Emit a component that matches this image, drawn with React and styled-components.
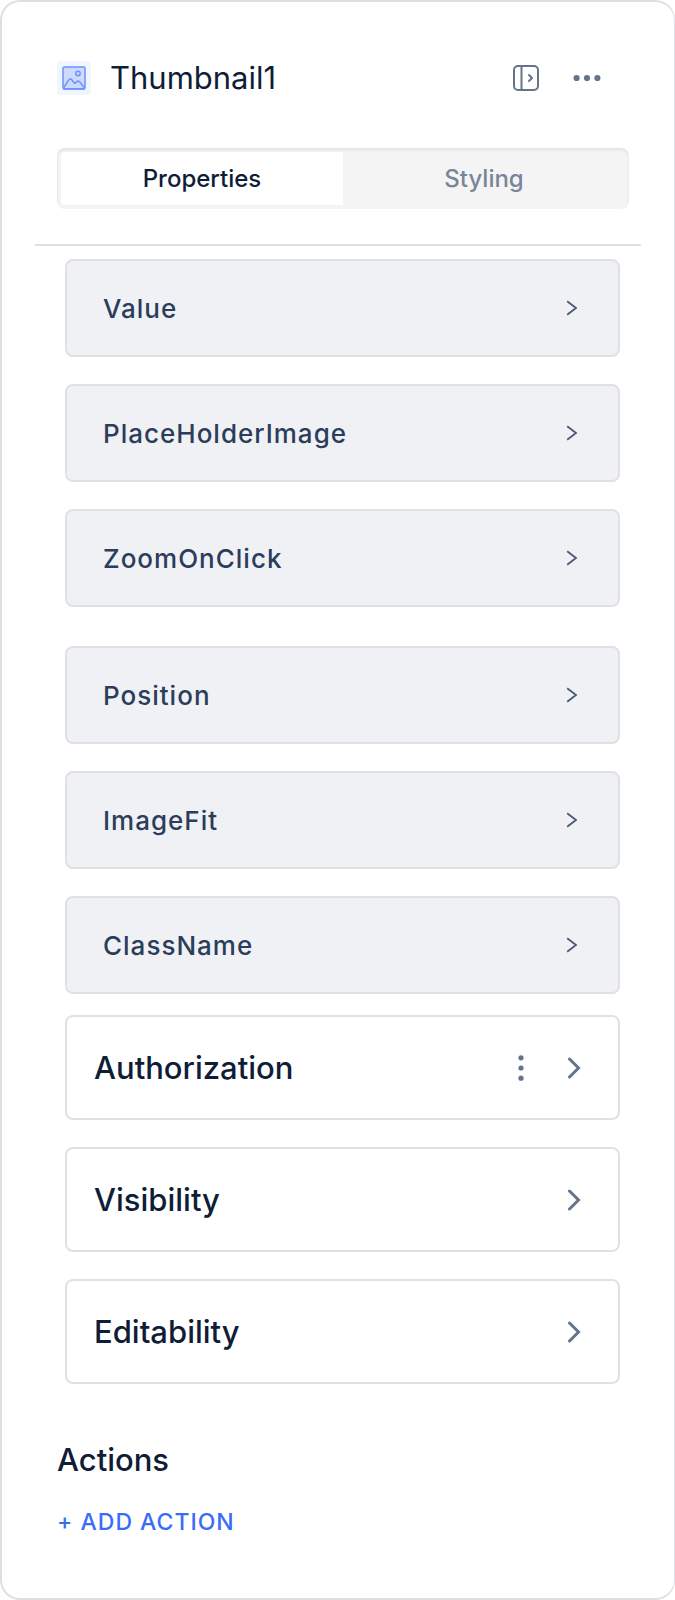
import React, { useState } from 'react';
import styled, { createGlobalStyle } from 'styled-components';

const GlobalStyle = createGlobalStyle`
	* {
		box-sizing: border-box;
	}

	body {
		margin: 0;
		background: #fff;
		font-family: Inter, "Liberation Sans", sans-serif;
		color: #0f1d37;
	}

	button {
		font: inherit;
		color: inherit;
		background: none;
		border: none;
		padding: 0;
		cursor: pointer;
	}

	svg {
		display: block;
	}
`;

const Panel = styled.main`
	min-height: 100vh;
	padding: 56px 33px 34px;
	border: 2px solid #dcdfe5;
	border-right-width: 1px;
	border-radius: 20px;
`;

const Header = styled.header`
	display: flex;
	align-items: center;
	height: 40px;
	padding: 0 22px;
`;

const WidgetIcon = styled.span`
	padding: 5px;
	margin-right: 19px;
	border-radius: 4px;
	background: #f0f5ff;
`;

const Title = styled.h1`
	flex: 1;
	margin: 0;
	font-size: 31px;
	line-height: 40px;
	font-weight: 400;
`;

const HeaderActions = styled.div`
	display: flex;
	align-items: center;
	gap: 34px;
	padding-right: 18px;
	color: #64748b;
`;

const Tabs = styled.div`
	display: flex;
	height: 61px;
	margin: 50px 12px 35px 22px;
	padding: 4px;
	border-radius: 8px;
	background: #f4f4f4;
	box-shadow: inset 0 2px 3px rgba(0, 0, 0, 0.08);
`;

const Tab = styled.button`
	flex: 1;
	font-size: 24px;
	font-weight: 500;
	border-radius: 4px 0 0 4px;
	color: ${(props) => (props.$active ? '#0f1d37' : '#78859b')};
	background: ${(props) => (props.$active ? '#fff' : 'transparent')};
`;

const Divider = styled.hr`
	margin: 0;
	border: none;
	border-top: 2px solid #dee0e4;
`;

const Group = styled.section`
	display: flex;
	flex-direction: column;
	gap: 27px;
	padding: 0 21px 0 30px;
	margin-top: ${(props) => props.$top}px;
`;

const PropertyRow = styled.button`
	display: flex;
	align-items: center;
	justify-content: space-between;
	height: 98px;
	padding: 0 40px 0 36px;
	border: 2px solid #dfe1e5;
	border-radius: 8px;
	background: #f0f1f4;
	color: #2b3d5b;
	font-size: 26px;
	font-weight: 500;
	letter-spacing: 1px;
`;

const SettingRow = styled.div`
	display: flex;
	align-items: center;
	height: 105px;
	padding: 0 37px 0 27px;
	border: 2px solid #dfe1e6;
	border-radius: 8px;
	color: #64748b;
`;

const SettingTitle = styled.button`
	flex: 1;
	align-self: stretch;
	text-align: left;
	font-size: 31px;
	font-weight: 500;
	color: #0f1d37;
`;

const IconButton = styled.button`
	display: flex;
	align-items: center;
	justify-content: center;
`;

const MenuButton = styled(IconButton)`
	margin-right: 43px;
`;

const Actions = styled.section`
	padding: 0 22px;
	margin-top: 56px;
`;

const ActionsTitle = styled.h2`
	margin: 0 0 22px;
	font-size: 31px;
	line-height: 40px;
	font-weight: 500;
`;

const AddAction = styled.button`
	font-size: 23px;
	line-height: 40px;
	font-weight: 500;
	letter-spacing: 1px;
	color: #3b6cf8;
`;

const ImageIcon = () => (
	<svg width="24" height="24" viewBox="0 0 24 24" fill="none" stroke="#6b93fb" strokeWidth="1.5">
		<rect x="1" y="1" width="22" height="22" rx="1.5" fill="#cddafc" />
		<circle cx="16" cy="7.5" r="2.2" />
		<path d="M1.5 22L6.6 14.2Q8.2 11.8 9.8 13.8L12 16.8Q12.8 17.8 13.8 16.6L14.8 15.6Q16.2 14.4 17.6 15.8L22.5 22" />
		<path d="M1.5 22.8H22.5" />
	</svg>
);

const CollapseIcon = () => (
	<svg width="26" height="26" viewBox="0 0 26 26" fill="none" stroke="currentColor" strokeWidth="2" strokeLinecap="round" strokeLinejoin="round">
		<rect x="1" y="1" width="24" height="24" rx="4" />
		<path d="M8.5 1V25M16 10L19 13L16 16" />
	</svg>
);

const MoreIcon = () => (
	<svg width="28" height="8" viewBox="0 0 28 8" fill="currentColor">
		<circle cx="3.6" cy="4" r="3.1" />
		<circle cx="14" cy="4" r="3.1" />
		<circle cx="24.4" cy="4" r="3.1" />
	</svg>
);

const KebabIcon = () => (
	<svg width="6" height="28" viewBox="0 0 6 28" fill="currentColor">
		<circle cx="3" cy="3.8" r="2.6" />
		<circle cx="3" cy="14" r="2.6" />
		<circle cx="3" cy="24.2" r="2.6" />
	</svg>
);

const SmallChevron = () => (
	<svg width="12" height="16" viewBox="0 0 12 16" fill="none" stroke="#4a5a75" strokeWidth="1.8">
		<path d="M1.2 1.2L10 8L1.2 14.8" />
	</svg>
);

const Chevron = () => (
	<svg width="14" height="22" viewBox="0 0 14 22" fill="none" stroke="currentColor" strokeWidth="3" strokeLinecap="round">
		<path d="M2.5 2L11.5 11L2.5 20" />
	</svg>
);

const TABS = ['Properties', 'Styling'];

const PROPERTY_GROUPS = [
	{ top: 13, names: ['Value', 'PlaceHolderImage', 'ZoomOnClick'] },
	{ top: 39, names: ['Position', 'ImageFit', 'ClassName'] },
];

const SETTINGS = [
	{ name: 'Authorization', menu: true },
	{ name: 'Visibility' },
	{ name: 'Editability' },
];

function App() {
	const [activeTab, setActiveTab] = useState('Properties');

	return (
		<>
			<GlobalStyle />
			<Panel>
				<Header>
					<WidgetIcon><ImageIcon /></WidgetIcon>
					<Title>Thumbnail1</Title>
					<HeaderActions>
						<IconButton aria-label="Collapse panel"><CollapseIcon /></IconButton>
						<IconButton aria-label="More options"><MoreIcon /></IconButton>
					</HeaderActions>
				</Header>

				<Tabs role="tablist">
					{TABS.map((tab) => (
						<Tab
							key={tab}
							role="tab"
							aria-selected={activeTab === tab}
							$active={activeTab === tab}
							onClick={() => setActiveTab(tab)}
						>
							{tab}
						</Tab>
					))}
				</Tabs>

				<Divider />

				{PROPERTY_GROUPS.map((group) => (
					<Group key={group.names[0]} $top={group.top}>
						{group.names.map((name) => (
							<PropertyRow key={name}>
								{name}
								<SmallChevron />
							</PropertyRow>
						))}
					</Group>
				))}

				<Group $top={21}>
					{SETTINGS.map(({ name, menu }) => (
						<SettingRow key={name}>
							<SettingTitle>{name}</SettingTitle>
							{menu && <MenuButton aria-label={`${name} options`}><KebabIcon /></MenuButton>}
							<IconButton aria-label={`Expand ${name}`}><Chevron /></IconButton>
						</SettingRow>
					))}
				</Group>

				<Actions>
					<ActionsTitle>Actions</ActionsTitle>
					<AddAction>+ ADD ACTION</AddAction>
				</Actions>
			</Panel>
		</>
	);
}

export default App;
